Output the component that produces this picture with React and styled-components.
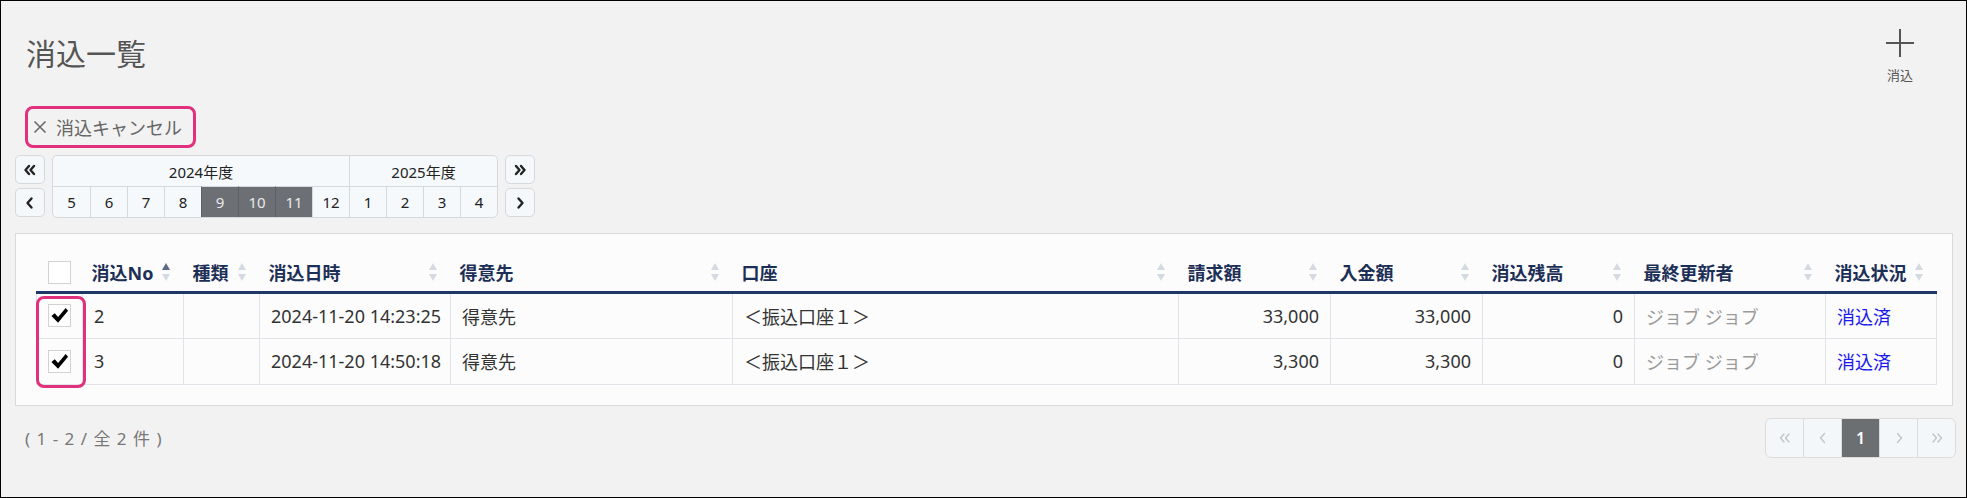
import React from "react";
import styled, { createGlobalStyle } from "styled-components";

const GlobalStyle = createGlobalStyle`
  html, body { margin: 0; padding: 0; }
  body {
    font-family: "Noto Sans", "Noto Sans CJK JP", sans-serif;
    background: #f2f2f2;
    color: #333;
  }
  * { box-sizing: border-box; }
`;

const Page = styled.div`
  width: 1967px;
  height: 498px;
  border: 1px solid #000;
  background: #f2f2f2;
  padding: 0 13px 0 14px;
  overflow: hidden;
`;

const Header = styled.div`
  display: flex;
  justify-content: space-between;
  align-items: flex-start;
  padding-top: 27px;
  height: 86px;
`;

const Title = styled.h1`
  margin: 8px 0 0 11px;
  font-size: 30px;
  line-height: 36px;
  font-weight: 400;
  color: #555;
`;

const AddAction = styled.div`
  display: flex;
  flex-direction: column;
  align-items: center;
  width: 58px;
  margin-right: 24px;
  color: #555;
  font-size: 13px;
  line-height: 16px;
  cursor: pointer;
  span { margin-top: 9px; }
`;

const Highlight = styled.div`
  display: inline-flex;
  align-items: center;
  border: 3px solid #e1307c;
  border-radius: 8px;
`;

const CancelWrap = styled(Highlight)`
  margin: 19px 0 0 10px;
  height: 42px;
  width: 171px;
`;

const CancelButton = styled.button`
  display: flex;
  align-items: center;
  gap: 9px;
  border: none;
  background: transparent;
  padding: 0 0 0 5px;
  font-family: inherit;
  font-size: 18px;
  color: #666;
  white-space: nowrap;
`;

const Picker = styled.div`
  display: flex;
  gap: 7px;
  margin-top: 7px;
`;

const NavColumn = styled.div`
  display: flex;
  flex-direction: column;
  gap: 4px;
`;

const NavButton = styled.button`
  width: 30px;
  height: 29px;
  padding: 0;
  display: flex;
  align-items: center;
  justify-content: center;
  background: #f5f8fa;
  border: 1px solid #d6d9dc;
  border-radius: 5px;
`;

const MonthGrid = styled.div`
  display: grid;
  grid-template-columns: repeat(12, 37px);
  grid-template-rows: 30px 31px;
  border: 1px solid #d6d9dc;
  border-radius: 5px;
  overflow: hidden;
  background: #f6f9fb;
`;

const YearCell = styled.div`
  grid-column: span ${(p) => p.span};
  display: flex;
  align-items: center;
  justify-content: center;
  font-size: 15px;
  color: #222;
  border-left: ${(p) => (p.first ? "none" : "1px solid #d6d9dc")};
`;

const MonthCell = styled.div`
  display: flex;
  align-items: center;
  justify-content: center;
  font-size: 15px;
  border-top: 1px solid #d6d9dc;
  border-left: ${(p) => (p.first ? "none" : p.active ? "1px solid #5d6165" : "1px solid #d6d9dc")};
  background: ${(p) => (p.active ? "#6c7074" : "transparent")};
  color: ${(p) => (p.active ? "#e9eaeb" : "#222")};
`;

const Card = styled.div`
  margin-top: 15px;
  background: #fcfcfc;
  border: 1px solid #dadada;
  padding: 20px 16px 20px 20px;
`;

const TableWrap = styled.div`
  position: relative;
`;

const Table = styled.table`
  width: 1900px;
  border-collapse: collapse;
  table-layout: fixed;
  font-size: 18px;
`;

const Th = styled.th`
  height: 38px;
  padding: 0 13px 0 9px;
  border-bottom: 3px solid #1f3866;
  text-align: left;
  font-weight: 700;
  color: #1c2f57;
  white-space: nowrap;
`;

const ThInner = styled.div`
  display: flex;
  align-items: center;
  justify-content: space-between;
`;

const Td = styled.td`
  height: 46px;
  padding: 0 11px;
  border: 1px solid #e0e4e8;
  text-align: ${(p) => (p.num ? "right" : "left")};
  color: ${(p) => p.tone || "#333"};
  white-space: nowrap;
`;

const Box = styled.div`
  width: 23px;
  height: 23px;
  border: 1px solid #d2d2d2;
  background: #fff;
  display: flex;
  align-items: center;
  justify-content: center;
`;

const CheckHighlight = styled.div`
  position: absolute;
  left: 0;
  top: 42px;
  width: 50px;
  height: 92px;
  border: 3px solid #e1307c;
  border-radius: 8px;
  pointer-events: none;
`;

const Footer = styled.div`
  display: flex;
  justify-content: space-between;
  align-items: center;
  margin-top: 12px;
`;

const Count = styled.div`
  padding-left: 10px;
  font-size: 17px;
  letter-spacing: 1px;
  color: #777;
`;

const Pager = styled.div`
  display: flex;
  margin-right: -3px;
`;

const PageButton = styled.div`
  width: 39px;
  height: 40px;
  display: flex;
  align-items: center;
  justify-content: center;
  border: 1px solid #dcdcdc;
  margin-left: -1px;
  background: ${(p) => (p.active ? "#6b6f72" : "#f4f7f9")};
  color: ${(p) => (p.active ? "#fff" : "#bbb")};
  font-size: 16px;
  font-weight: 600;
  &:first-child { border-radius: 6px 0 0 6px; margin-left: 0; }
  &:last-child { border-radius: 0 6px 6px 0; }
`;

const Chevron = ({ dir = "left", double, color = "#222", width = 2.4, size = 14 }) => {
  const flip = dir === "right" ? "scale(-1,1) translate(-14,0)" : undefined;
  return (
    <svg width={size} height={size} viewBox="0 0 14 14">
      <g transform={flip} fill="none" stroke={color} strokeWidth={width} strokeLinecap="round" strokeLinejoin="round">
        {double ? (
          <>
            <polyline points="6,3 2.5,7 6,11" />
            <polyline points="11,3 7.5,7 11,11" />
          </>
        ) : (
          <polyline points="8.5,2.5 4.5,7 8.5,11.5" />
        )}
      </g>
    </svg>
  );
};

const SortIcon = ({ active }) => (
  <svg width="10" height="20" viewBox="0 0 10 20">
    <polygon points="1,8 5,1 9,8" fill={active ? "#5b6b84" : "#d3dae2"} />
    <polygon points="1,12 5,19 9,12" fill="#d3dae2" />
  </svg>
);

const Check = () => (
  <svg width="19" height="19" viewBox="0 0 20 20">
    <path d="M1.5 10.5 L5 7.5 L8.5 11.5 L16.5 2 L19 5 L8.5 17.5 Z" fill="#000" />
  </svg>
);

const columns = [
  { label: "", width: 46, check: true },
  { label: "消込No", width: 101, active: true },
  { label: "種類", width: 76 },
  { label: "消込日時", width: 191 },
  { label: "得意先", width: 282 },
  { label: "口座", width: 446 },
  { label: "請求額", width: 152 },
  { label: "入金額", width: 152 },
  { label: "消込残高", width: 152 },
  { label: "最終更新者", width: 191 },
  { label: "消込状況", width: 111 },
];

const rows = [
  { no: 2, date: "2024-11-20 14:23:25", customer: "得意先", account: "＜振込口座１＞", billed: "33,000", paid: "33,000", rest: "0", user: "ジョブ ジョブ", status: "消込済" },
  { no: 3, date: "2024-11-20 14:50:18", customer: "得意先", account: "＜振込口座１＞", billed: "3,300", paid: "3,300", rest: "0", user: "ジョブ ジョブ", status: "消込済" },
];

const months = [5, 6, 7, 8, 9, 10, 11, 12, 1, 2, 3, 4];
const activeMonths = [4, 5, 6];

export default function App() {
  return (
    <>
      <GlobalStyle />
      <Page>
        <Header>
          <Title>消込一覧</Title>
          <AddAction>
            <svg width="30" height="30" viewBox="0 0 30 30">
              <path d="M15 1 V29 M1 15 H29" stroke="#555" strokeWidth="2" />
            </svg>
            <span>消込</span>
          </AddAction>
        </Header>

        <CancelWrap>
          <CancelButton>
            <svg width="14" height="14" viewBox="0 0 14 14">
              <path d="M1.5 1.5 L12.5 12.5 M12.5 1.5 L1.5 12.5" stroke="#666" strokeWidth="1.5" />
            </svg>
            消込キャンセル
          </CancelButton>
        </CancelWrap>

        <Picker>
          <NavColumn>
            <NavButton><Chevron double /></NavButton>
            <NavButton><Chevron /></NavButton>
          </NavColumn>
          <MonthGrid>
            <YearCell span={8} first>2024年度</YearCell>
            <YearCell span={4}>2025年度</YearCell>
            {months.map((m, i) => (
              <MonthCell key={i} first={i === 0} active={activeMonths.includes(i)}>
                {m}
              </MonthCell>
            ))}
          </MonthGrid>
          <NavColumn>
            <NavButton><Chevron double dir="right" /></NavButton>
            <NavButton><Chevron dir="right" /></NavButton>
          </NavColumn>
        </Picker>

        <Card>
          <TableWrap>
            <Table>
              <colgroup>
                {columns.map((c, i) => (
                  <col key={i} style={{ width: c.width }} />
                ))}
              </colgroup>
              <thead>
                <tr>
                  {columns.map((c, i) =>
                    c.check ? (
                      <Th key={i} style={{ paddingLeft: 11 }}>
                        <Box />
                      </Th>
                    ) : (
                      <Th key={i}>
                        <ThInner>
                          {c.label}
                          <SortIcon active={c.active} />
                        </ThInner>
                      </Th>
                    )
                  )}
                </tr>
              </thead>
              <tbody>
                {rows.map((r) => (
                  <tr key={r.no}>
                    <Td>
                      <Box><Check /></Box>
                    </Td>
                    <Td>{r.no}</Td>
                    <Td />
                    <Td>{r.date}</Td>
                    <Td>{r.customer}</Td>
                    <Td>{r.account}</Td>
                    <Td num>{r.billed}</Td>
                    <Td num>{r.paid}</Td>
                    <Td num>{r.rest}</Td>
                    <Td tone="#9a9a9a">{r.user}</Td>
                    <Td tone="#1a1aee">{r.status}</Td>
                  </tr>
                ))}
              </tbody>
            </Table>
            <CheckHighlight />
          </TableWrap>
        </Card>

        <Footer>
          <Count>( 1 - 2 / 全 2 件 )</Count>
          <Pager>
            <PageButton><Chevron double color="#c2c2c2" width={1.3} /></PageButton>
            <PageButton><Chevron color="#c2c2c2" width={1.3} /></PageButton>
            <PageButton active>1</PageButton>
            <PageButton><Chevron dir="right" color="#c2c2c2" width={1.3} /></PageButton>
            <PageButton><Chevron double dir="right" color="#c2c2c2" width={1.3} /></PageButton>
          </Pager>
        </Footer>
      </Page>
    </>
  );
}
